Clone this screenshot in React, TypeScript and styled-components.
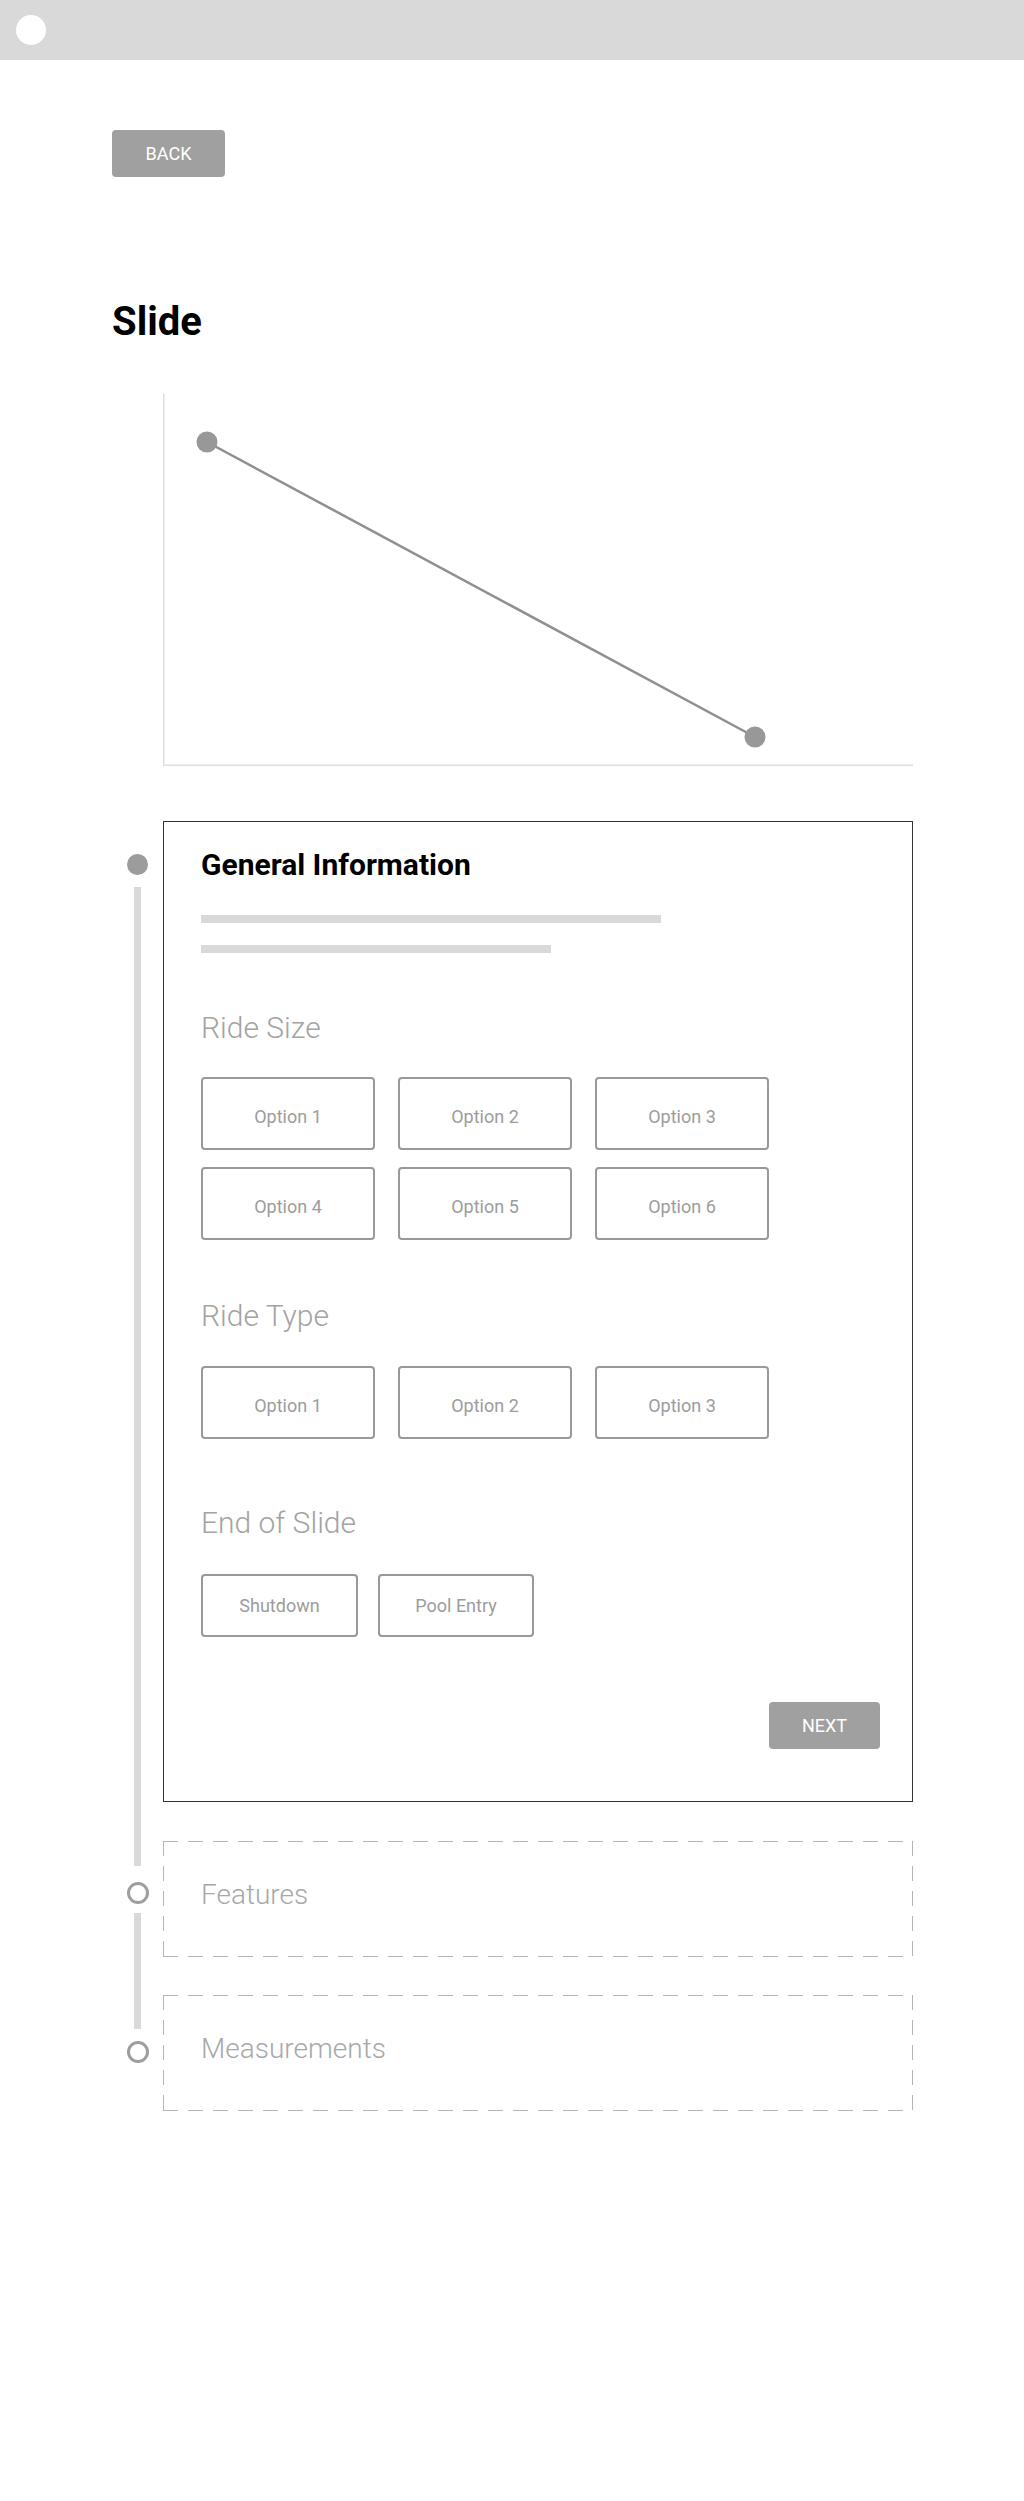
import styled, { createGlobalStyle } from "styled-components";

const GlobalStyle = createGlobalStyle`
  * {
    box-sizing: border-box;
  }
  body {
    margin: 0;
    background: #fff;
    font-family: Roboto, "Liberation Sans", sans-serif;
  }
`;

const TopBar = styled.header`
  height: 60px;
  background: #d9d9d9;
  padding: 15px 16px;
`;

const Avatar = styled.div`
  width: 30px;
  height: 30px;
  border-radius: 50%;
  background: #fff;
`;

const Main = styled.main`
  width: 913px;
  padding: 70px 0 380px 112px;
`;

const FilledButton = styled.button`
  width: ${(p: { $w: number }) => p.$w}px;
  height: 47px;
  margin: 0;
  padding: 0;
  border: none;
  border-radius: 4px;
  background: #a0a0a0;
  color: #fff;
  font-family: Roboto, "Liberation Sans", sans-serif;
  font-size: 18px;
  display: flex;
  align-items: center;
  justify-content: center;
`;

const NextButton = styled(FilledButton)`
  align-self: flex-end;
  margin-top: 65px;
`;

const Title = styled.h1`
  margin: 121px 0 0;
  font-size: 40px;
  line-height: 48px;
  font-weight: 700;
  color: #000;
`;

const ChartBox = styled.div`
  margin: 48px 0 0 51px;
  width: 750px;
  height: 372px;
  svg {
    display: block;
  }
`;

const Steps = styled.div`
  margin-top: 55px;
`;

const Step = styled.section`
  display: grid;
  grid-template-columns: 51px 750px;
`;

const Rail = styled.div`
  display: flex;
  flex-direction: column;
  align-items: center;
`;

const RailLine = styled.div<{ $h?: number }>`
  width: 7px;
  background: #d9d9d9;
  ${(p) => (p.$h ? `height: ${p.$h}px;` : "flex: 1;")}
`;

const Marker = styled.div<{ $filled?: boolean; $mt?: number; $mb?: number }>`
  flex: none;
  width: ${(p) => (p.$filled ? 21 : 22)}px;
  height: ${(p) => (p.$filled ? 21 : 22)}px;
  border-radius: 50%;
  margin-top: ${(p) => p.$mt ?? 0}px;
  margin-bottom: ${(p) => p.$mb ?? 0}px;
  background: ${(p) => (p.$filled ? "#9c9c9c" : "#fff")};
  border: ${(p) => (p.$filled ? "none" : "3px solid #9e9e9e")};
`;

const StepBody = styled.div<{ $pb: number }>`
  padding-bottom: ${(p) => p.$pb}px;
`;

const Card = styled.div`
  border: 1px solid #333;
  padding: 25px 32px 52px 37px;
  display: flex;
  flex-direction: column;
`;

const CardTitle = styled.h2`
  margin: 0;
  font-size: 30px;
  line-height: 36px;
  font-weight: 700;
  color: #000;
`;

const Bar = styled.div<{ $w: number; $mt: number }>`
  width: ${(p) => p.$w}px;
  height: 8px;
  margin-top: ${(p) => p.$mt}px;
  background: #d9d9d9;
`;

const SectionLabel = styled.h3<{ $mt: number }>`
  margin: ${(p) => p.$mt}px 0 0;
  font-size: 30px;
  line-height: 34px;
  font-weight: 300;
  color: #a3a3a3;
`;

const OptionGrid = styled.div<{ $mt: number }>`
  margin-top: ${(p) => p.$mt}px;
  display: grid;
  grid-template-columns: repeat(3, 174px);
  column-gap: 23px;
  row-gap: 17px;
`;

const EndRow = styled.div`
  margin-top: 34px;
  display: flex;
  gap: 20px;
`;

const Choice = styled.div<{ $w: number; $h: number; $shift?: number }>`
  width: ${(p) => p.$w}px;
  height: ${(p) => p.$h}px;
  border: 2px solid #999;
  border-radius: 4px;
  padding-top: ${(p) => p.$shift ?? 0}px;
  display: flex;
  align-items: center;
  justify-content: center;
  font-size: 18px;
  font-weight: 400;
  color: #9c9c9c;
`;

const dash = (dir: string) =>
  `repeating-linear-gradient(${dir}, #b5b5b5 0 15px, transparent 15px 25px)`;

const Pending = styled.div`
  height: 116px;
  padding: 37px 0 0 38px;
  background-image: ${dash("90deg")}, ${dash("90deg")}, ${dash("180deg")},
    ${dash("180deg")};
  background-size: 100% 1px, 100% 1px, 1px 100%, 1px 100%;
  background-position: left top, left bottom, left top, right top;
  background-repeat: no-repeat;
  font-size: 28px;
  line-height: 34px;
  font-weight: 300;
  color: #a8a8a8;
`;

const rideSizes = ["Option 1", "Option 2", "Option 3", "Option 4", "Option 5", "Option 6"];
const rideTypes = ["Option 1", "Option 2", "Option 3"];

function SlopeChart() {
  return (
    <svg width="750" height="372" viewBox="0 0 750 372">
      <line x1="0.75" y1="0" x2="0.75" y2="372" stroke="#dedede" strokeWidth="1.5" />
      <line x1="0" y1="371.25" x2="750" y2="371.25" stroke="#dedede" strokeWidth="1.5" />
      <line x1="44" y1="48" x2="592" y2="343" stroke="#8f8f8f" strokeWidth="2.5" />
      <circle cx="44" cy="48" r="10.5" fill="#989898" />
      <circle cx="592" cy="343" r="10.5" fill="#989898" />
    </svg>
  );
}

export default function App() {
  return (
    <>
      <GlobalStyle />
      <TopBar>
        <Avatar />
      </TopBar>
      <Main>
        <FilledButton $w={113}>BACK</FilledButton>
        <Title>Slide</Title>
        <ChartBox>
          <SlopeChart />
        </ChartBox>
        <Steps>
          <Step>
            <Rail>
              <Marker $filled $mt={33} $mb={12} />
              <RailLine />
            </Rail>
            <StepBody $pb={39}>
              <Card>
                <CardTitle>General Information</CardTitle>
                <Bar $w={460} $mt={32} />
                <Bar $w={350} $mt={22} />

                <SectionLabel $mt={58}>Ride Size</SectionLabel>
                <OptionGrid $mt={32}>
                  {rideSizes.map((o) => (
                    <Choice key={o} $w={174} $h={73} $shift={6}>
                      {o}
                    </Choice>
                  ))}
                </OptionGrid>

                <SectionLabel $mt={59}>Ride Type</SectionLabel>
                <OptionGrid $mt={33}>
                  {rideTypes.map((o) => (
                    <Choice key={o} $w={174} $h={73} $shift={6}>
                      {o}
                    </Choice>
                  ))}
                </OptionGrid>

                <SectionLabel $mt={67}>End of Slide</SectionLabel>
                <EndRow>
                  <Choice $w={157} $h={63}>
                    Shutdown
                  </Choice>
                  <Choice $w={156} $h={63}>
                    Pool Entry
                  </Choice>
                </EndRow>

                <NextButton $w={111}>NEXT</NextButton>
              </Card>
            </StepBody>
          </Step>

          <Step>
            <Rail>
              <RailLine $h={25} />
              <Marker $mt={16} $mb={9} />
              <RailLine />
            </Rail>
            <StepBody $pb={38}>
              <Pending>Features</Pending>
            </StepBody>
          </Step>

          <Step>
            <Rail>
              <RailLine $h={34} />
              <Marker $mt={12} />
            </Rail>
            <StepBody $pb={0}>
              <Pending>Measurements</Pending>
            </StepBody>
          </Step>
        </Steps>
      </Main>
    </>
  );
}
